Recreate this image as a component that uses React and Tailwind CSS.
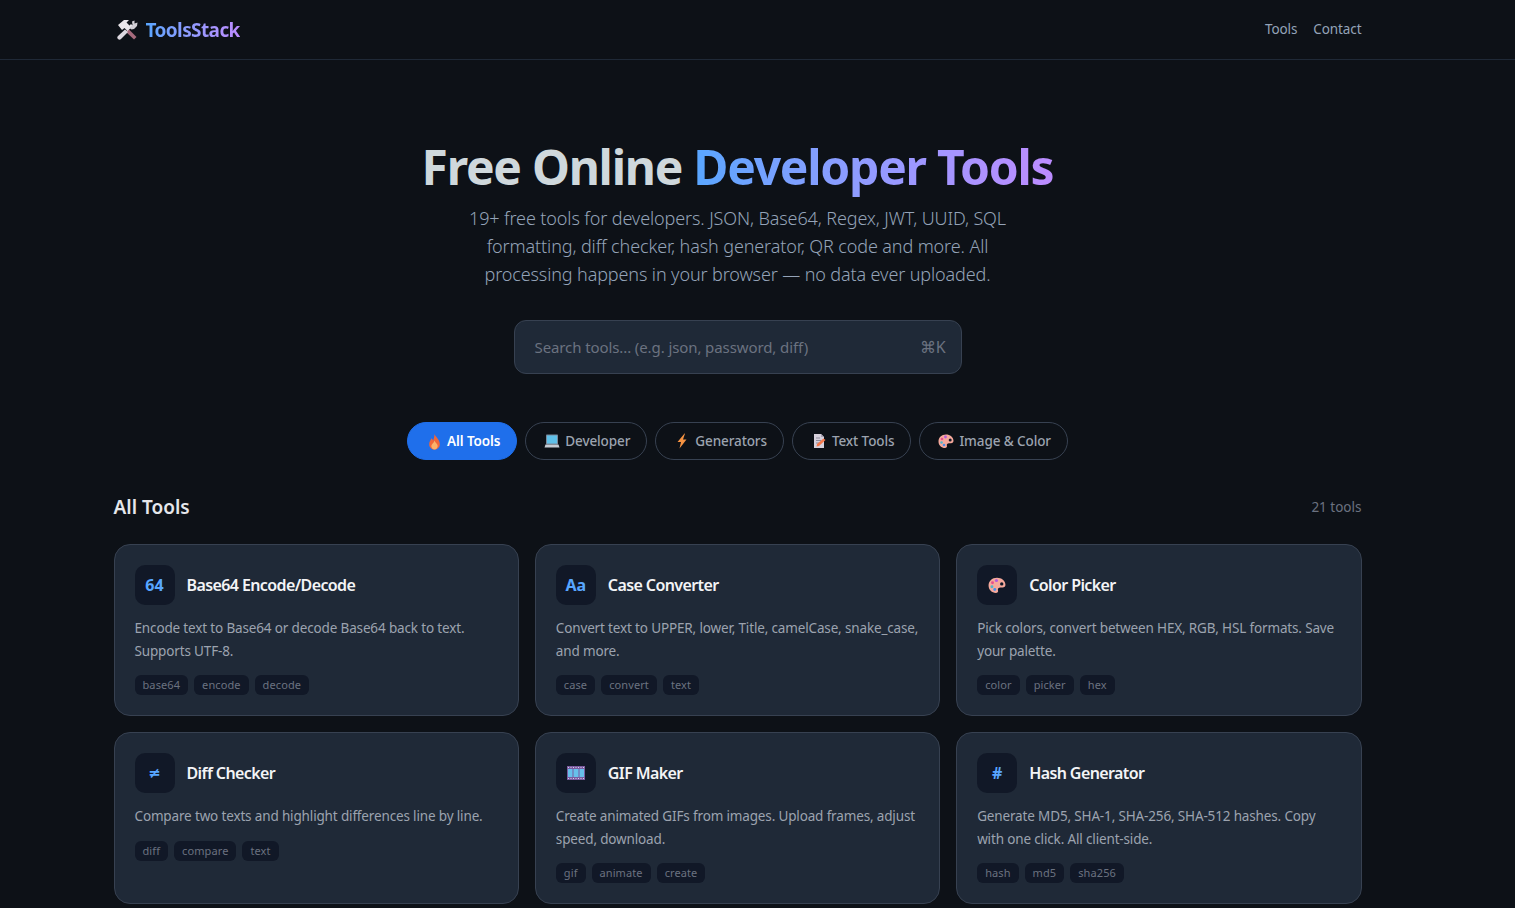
import React from "react";

const Hammer = () => (
  <svg viewBox="0 0 24 24" className="size-[24px]">
    <path d="M13.5 11 L21.5 19 L19 21.5 L10.5 13.5Z" fill="#a56a7c" />
    <path d="M10 11.5 L3 18 C2 19 2 20 3 21 C4 22 5 22 6 21 L13 14Z" fill="#dcd8e0" />
    <path d="M3 7 L9 2 L14 2 L11.5 4.5 L14.5 7.5 L16 6 L18 8 L12.5 13 L9.5 10 L7 12Z" fill="#e9e6ea" />
    <path d="M14.5 10 L17.5 7 L17 3.5 L19.5 2.5 L19.5 5.5 L22.5 4.5 L22 8 L19 11 L16.5 11.5Z" fill="#d2cfd6" />
  </svg>
);
const Fire = () => (
  <svg viewBox="0 0 16 16" className="size-[17px]">
    <path d="M8 1 C9 4 13 6 13 10.5 C13 13.5 10.7 15.5 8 15.5 C5.3 15.5 3 13.5 3 10.5 C3 8 4.5 7 5 5 C6 6 6.5 6.5 6.8 7 C7.5 5 8 3 8 1Z" fill="#f0673a" />
    <path d="M8 7 C8.5 9 11 10 11 12.3 C11 14 9.6 15.5 8 15.5 C6.4 15.5 5 14 5 12.3 C5 10.5 7.5 9.5 8 7Z" fill="#fbb26a" />
  </svg>
);
const Laptop = () => (
  <svg viewBox="0 0 16 16" className="size-[16px]">
    <rect x="2" y="1.5" width="12" height="10" rx="0.8" fill="#7a8a9c" />
    <rect x="3" y="2.5" width="10" height="8" fill="#5fc0e8" />
    <path d="M1.5 11.5 H14.5 L15.5 14.5 H0.5Z" fill="#c6ccd4" />
  </svg>
);
const Bolt = () => (
  <svg viewBox="0 0 16 16" className="size-[16px]">
    <path d="M10.5 0.5 L3.5 9 H7 L5.5 15.5 L12.5 6.5 H9 L11 0.5Z" fill="#f59342" />
  </svg>
);
const Memo = () => (
  <svg viewBox="0 0 16 16" className="size-[16px]">
    <path d="M3 1 H10 L13 4 V15 H3Z" fill="#d6d0dc" />
    <path d="M10 1 L13 4 H10Z" fill="#aaa4b4" />
    <path d="M5 5 H9 M5 7.5 H10 M5 10 H8" stroke="#8d8a9c" strokeWidth="1" />
    <path d="M5.5 13.5 L6 11 L12.5 5.5 L14.5 7 L8 13Z" fill="#f4774a" />
  </svg>
);
const Palette = ({ s = "size-[16px]" }) => (
  <svg viewBox="0 0 16 16" className={s}>
    <path d="M8 1.5 C3.5 1.5 0.5 4.5 0.5 8.5 C0.5 12.5 3.5 15 7 15 C8.5 15 9.3 14 8.9 12.8 C8.4 11.3 9.5 10.3 11 10.3 H13 C14.5 10.3 15.5 9.3 15.5 7.8 C15.5 4 12 1.5 8 1.5Z" fill="#f6a99c" />
    <circle cx="12.2" cy="7" r="1.5" fill="#111827" />
    <circle cx="7.5" cy="4" r="1.4" fill="#b65bd8" />
    <circle cx="4" cy="6" r="1.3" fill="#e8508c" />
    <circle cx="3.5" cy="9.5" r="1.3" fill="#53b4c8" />
    <circle cx="6" cy="12" r="1.3" fill="#4a90e8" />
  </svg>
);
const Film = () => (
  <svg viewBox="0 0 18 14" className="h-[14px] w-[18px]">
    <rect width="18" height="14" fill="#7a5ba0" />
    <rect x="1" y="3" width="16" height="8" fill="#67c0ea" />
    <path d="M6 3V11M12 3V11" stroke="#7a5ba0" strokeWidth="1" />
    <path d="M1 1.5H17M1 12.5H17" stroke="#d8cfe6" strokeWidth="1" strokeDasharray="1 1.5" />
  </svg>
);

const tabs = [[<Fire />, "All Tools", true], [<Laptop />, "Developer"], [<Bolt />, "Generators"], [<Memo />, "Text Tools"], [<Palette />, "Image & Color"]];
const cards = [
  ["64", "Base64 Encode/Decode", "Encode text to Base64 or decode Base64 back to text. Supports UTF-8.", ["base64", "encode", "decode"]],
  ["Aa", "Case Converter", "Convert text to UPPER, lower, Title, camelCase, snake_case, and more.", ["case", "convert", "text"]],
  [<Palette s="size-[18px]" />, "Color Picker", "Pick colors, convert between HEX, RGB, HSL formats. Save your palette.", ["color", "picker", "hex"]],
  [<span className="font-['DejaVu_Sans',sans-serif] text-[15px]">≠</span>, "Diff Checker", "Compare two texts and highlight differences line by line.", ["diff", "compare", "text"]],
  [<Film />, "GIF Maker", "Create animated GIFs from images. Upload frames, adjust speed, download.", ["gif", "animate", "create"]],
  ["#", "Hash Generator", "Generate MD5, SHA-1, SHA-256, SHA-512 hashes. Copy with one click. All client-side.", ["hash", "md5", "sha256"]],
];

export default function App() {
  return (
    <div className="h-[908px] overflow-hidden bg-[#0d1117] font-['Noto_Sans',sans-serif] text-[#e5e7eb]">
      <header className="h-[60px] border-b border-[#1f2937]">
        <div className="ml-[113.5px] flex h-[59px] w-[1248px] items-center justify-between">
          <div className="flex items-center gap-[7px] pl-[1px] text-[19px] font-bold tracking-[-0.6px]">
            <Hammer />
            <span className="bg-gradient-to-r from-[#58a6ff] to-[#bc8cff] bg-clip-text pt-[2px] text-transparent">ToolsStack</span>
          </div>
          <nav className="flex gap-4 text-[13.5px] tracking-[-0.1px] text-[#94a3b8]"><span>Tools</span><span>Contact</span></nav>
        </div>
      </header>
      <main className="ml-[113.5px] w-[1248px]">
        <section className="flex flex-col items-center pt-[79px]">
          <h1 className="text-[48px] leading-[56px] font-bold tracking-[-1.25px] text-[#cfd8dc]">
            Free Online <span className="bg-gradient-to-r from-[#58a6ff] to-[#bc8cff] bg-clip-text text-transparent">Developer Tools</span>
          </h1>
          <p className="mt-[9px] w-[560px] text-center text-[18px] leading-[28px] font-light tracking-[-0.12px] text-[#94a3b8]">19+ free tools for developers. JSON, Base64, Regex, JWT, UUID, SQL formatting, diff checker, hash generator, QR code and more. All processing happens in your browser — no data ever uploaded.</p>
          <div className="mt-[32px] flex h-[54px] w-[448px] items-center justify-between rounded-xl border border-[#374151] bg-[#1f2937] pl-5 pr-[15px] text-[15px] tracking-[-0.1px] text-[#6b7280]">
            <span>Search tools... (e.g. json, password, diff)</span><span className="text-base">⌘K</span>
          </div>
          <div className="mt-12 flex gap-2">
            {tabs.map(([e, t, on]) => (
              <div key={t} className={`flex h-[38px] items-center gap-1 rounded-full border pl-[17px] pr-4 text-[13.5px] font-medium tracking-[-0.1px] ${on ? "border-[#1f6feb] bg-[#1f6feb] font-semibold text-white" : "border-[#374151] text-[#9ca3af]"}`}>
                <span className="flex w-[18px] justify-center">{e}</span>{t}
              </div>
            ))}
          </div>
        </section>
        <div className="mt-[33px] flex items-center justify-between">
          <h2 className="text-[19px] leading-7 font-semibold text-[#e5e7eb]">All Tools</h2>
          <span className="text-[13.5px] text-[#6b7280]">21 tools</span>
        </div>
        <div className="mt-[23px] grid grid-cols-3 gap-4">
          {cards.map(([ic, t, d, tags]) => (
            <div key={t} className="rounded-2xl border border-[#374151] bg-[#1f2937] px-5 pt-5 pb-5">
              <div className="flex items-center gap-3">
                <div className="flex size-10 items-center justify-center rounded-[10px] bg-[#111827] text-[16px] font-bold text-[#58a6ff]">{ic}</div>
                <div className="text-base font-semibold tracking-[-0.6px] text-[#f3f4f6]">{t}</div>
              </div>
              <p className="mt-3 text-[13.5px] leading-[22.5px] tracking-[-0.15px] text-[#9ca3af]">{d}</p>
              <div className="mt-[13px] flex gap-[6px]">
                {tags.map((x) => <span key={x} className="rounded-md bg-[#111827] px-2 py-[2px] text-[11px] leading-4 tracking-[0.1px] text-[#6b7280]">{x}</span>)}
              </div>
            </div>
          ))}
        </div>
      </main>
    </div>
  );
}
